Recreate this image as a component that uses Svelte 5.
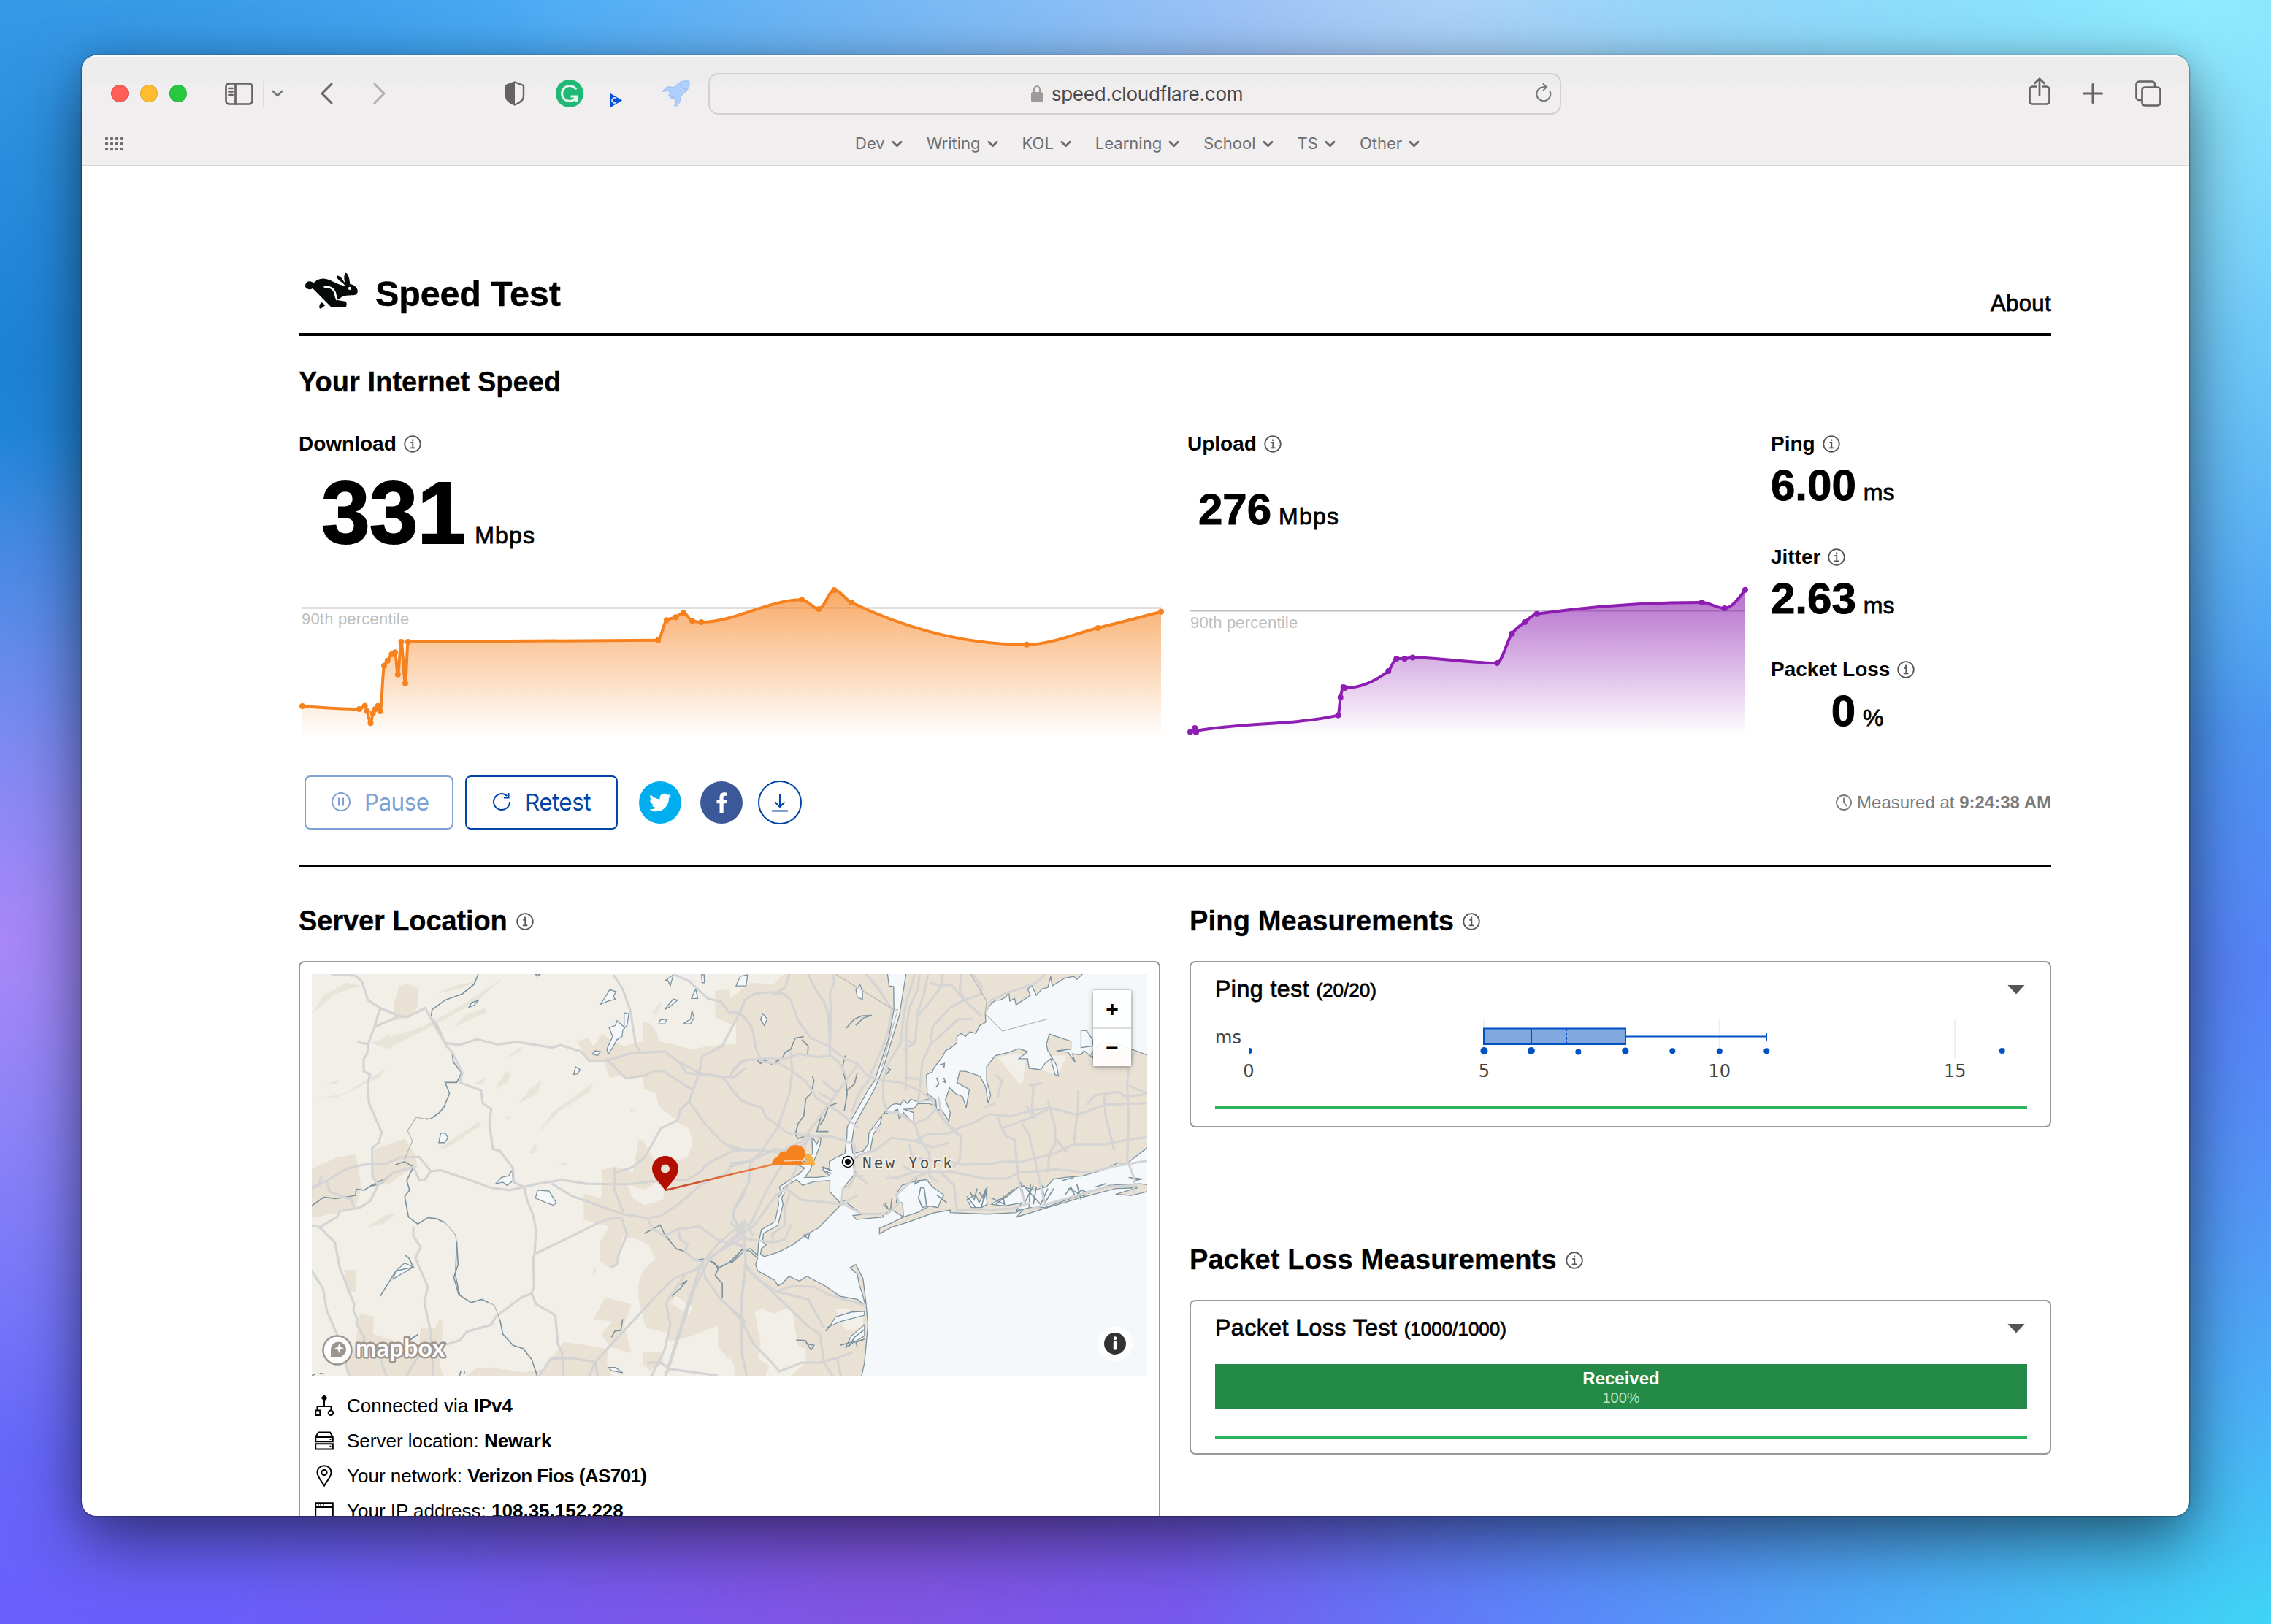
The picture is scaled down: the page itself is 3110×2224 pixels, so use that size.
<script>
  const bookmarks = ['Dev', 'Writing', 'KOL', 'Learning', 'School', 'TS', 'Other'];

  const download = [
    [414, 967], [492, 971], [499.7, 966.7], [502.8, 974], [507.5, 990.3], [510.6, 976.7],
    [513.7, 971.3], [517.6, 966.7], [520.7, 974], [526, 911.7], [530.8, 904.7], [536.3, 896],
    [541, 893.3], [544.8, 923.7], [549.5, 879], [555, 935.7], [558.8, 879], [901, 876.7],
    [912.9, 849.3], [925.3, 845.3], [936, 839.3], [948, 850.3], [960.3, 852], [1098, 821.3],
    [1121.4, 834], [1142.4, 808], [1165.8, 825], [1406, 882.7], [1503.5, 860], [1590, 837.7]
  ];
  const upload = [
    [1630, 1002.5], [1638, 1001], [1832.5, 979.6], [1835.7, 955], [1839.6, 941],
    [1842, 942], [1901.3, 919], [1912.4, 902], [1923.5, 902], [1934.5, 900.4], [2050, 908],
    [2070.5, 867.8], [2088, 852], [2104.5, 840.8], [2330.7, 825], [2361.6, 833], [2390, 807.8]
  ];
  const uploadDots = [...upload, [1636.4, 997], [1638, 1003]];

  // Monotone cubic interpolation, so the line never overshoots its samples.
  function monotone(pts) {
    const n = pts.length;
    const h = [], s = [], m = [];
    for (let i = 0; i < n - 1; i++) {
      h[i] = pts[i + 1][0] - pts[i][0];
      s[i] = (pts[i + 1][1] - pts[i][1]) / h[i];
    }
    for (let i = 1; i < n - 1; i++) {
      const p = (s[i - 1] * h[i] + s[i] * h[i - 1]) / (h[i - 1] + h[i]);
      m[i] = (Math.sign(s[i - 1]) + Math.sign(s[i])) * Math.min(Math.abs(s[i - 1]), Math.abs(s[i]), 0.5 * Math.abs(p)) || 0;
    }
    m[0] = (3 * s[0] - m[1]) / 2;
    m[n - 1] = (3 * s[n - 2] - m[n - 2]) / 2;
    let d = `M${pts[0][0]},${pts[0][1]}`;
    for (let i = 0; i < n - 1; i++) {
      const k = h[i] / 3;
      d += `C${pts[i][0] + k},${pts[i][1] + k * m[i]} ${pts[i + 1][0] - k},${pts[i + 1][1] - k * m[i + 1]} ${pts[i + 1][0]},${pts[i + 1][1]}`;
    }
    return d;
  }
  const area = (pts, y) => `${monotone(pts)}L${pts[pts.length - 1][0]},${y}L${pts[0][0]},${y}Z`;

  const side = [
    { label: 'Ping', value: '6.00', unit: 'ms' },
    { label: 'Jitter', value: '2.63', unit: 'ms' },
    { label: 'Packet Loss', value: '0', unit: '%' }
  ];
  const ticks = [0, 5, 10, 15];
  const px = (v) => 1710 + v * 64.48;
  const pings = [[5, 1440, 5], [6, 1440, 5], [7, 1441.5, 4], [8, 1440, 4.6], [9, 1440.3, 4], [10, 1440.6, 4], [11, 1440.3, 4], [16, 1440, 4]];

  const urbanWest = [
    '370,300 400,293 438,308 438,360 410,400 350,410 355,350',
    '60,880 160,840 220,832 240,935 220,1005 60,1035',
    '285,815 390,783 425,830 435,875 390,890 330,930 280,910',
    '180,1197 220,1197 220,1267 190,1267',
    '985,475 1025,465 1045,490 1075,450 1100,470 1150,490 1215,475 1215,415 1240,418 1265,450 1270,475 1320,485 1380,500 1490,485 1570,485 1570,1540 1535,1540 1530,1500 1475,1440 1475,1373 1370,1410 1305,1425 1300,1395 1225,1380 1200,1290 1200,1240 1215,1200 1257,1162 1235,1120 1195,1100 1145,1093 1125,1180 1100,1190 1065,1170 1065,1110 1100,1060 1010,1040 1010,955 1070,970 1075,880 1120,870 1180,890 1200,785 1218,788 1240,830 1275,745 1340,725 1310,710 1270,680 1260,640 1220,625 1215,590 1130,585 1100,590 1080,540 1030,540',
    '1085,1282 1175,1305 1150,1370 1175,1460 1100,1440 1070,1400 1110,1360 1043,1353',
    '1215,1457 1285,1457 1285,1490 1240,1515 1215,1495',
    '590,1540 640,1507 690,1505 800,1520 870,1510 895,1480 940,1425 1060,1440 1095,1450 1090,1490 1110,1540',
    '235,1335 283,1345 280,1400 350,1420 440,1440 445,1378 495,1380 510,1355 525,1360 515,1450 510,1500 530,1540 200,1540 180,1490 215,1450',
    '1465,315 1530,310 1570,330 1570,400 1520,420 1465,400'
  ];
  const openWest = [
    '1240,830 1275,745 1330,728 1375,750 1387,800 1370,840 1320,855 1255,850',
    '1160,925 1220,945 1260,920 1290,945 1285,975 1220,992 1180,970',
    '1310,1300 1330,1280 1385,1315 1375,1340'
  ];
  const hills = [
    '68,390 110,330 190,290 238,300 150,325', '68,660 180,640 330,560 400,490 300,590 160,650', '270,480 450,430 590,360 730,275 640,350 500,420 330,500',
    '500,820 645,730 655,740 540,810', '850,770 900,700 1045,605 1030,635 920,700', '785,670 830,620 865,598 850,640',
    '705,625 740,570 760,575 745,605', '260,1063 330,1020 358,1020 320,1050', '820,830 840,800 852,805 840,828',
    '740,530 785,495 797,500 780,515', '630,610 668,588 665,610', '110,612 160,597 158,610', '735,722 758,705 755,720',
    '920,868 950,853 950,865', '1165,695 1175,688 1195,694 1178,700', '1245,390 1275,350 1280,358 1262,392', '1040,1220 1045,1185 1055,1195',
    '560,430 600,390 670,370 670,385 610,410', '320,465 330,450 340,460', '500,325 560,300 640,285 580,310'
  ];
  const roadsWest = [
    '135,263 220,268 243,288 263,345 305,370 285,430 265,480 260,515 248,530 248,570 270,580 262,605 266,670 310,762 300,795 278,812 278,900 298,930',
    '305,370 370,395 400,398 460,370 480,400 500,420 530,480 580,487 640,468 710,485 780,477 900,495 930,487 1000,507 1030,537 1080,538 1180,512 1290,507 1340,540 1410,575 1490,587 1530,588 1570,560',
    '285,430 365,398', '225,478 262,484',
    '480,400 497,430 535,490 555,510 590,575 580,605 655,630 660,670 690,690 683,730 695,815 718,820 765,875 768,920 803,935 815,980 835,1025 845,1070 840,1145 835,1160 838,1245 830,1272 845,1305 912,1340 920,1430 935,1460 940,1540',
    '60,945 120,915 190,877 250,864 320,864 375,842 440,840 480,885 515,882 590,905 690,938 755,945 850,925 935,913 1020,925 1160,927 1240,918 1370,912 1410,890 1440,860 1530,820 1570,818',
    '900,925 965,962 1060,993 1150,1022 1230,1033 1275,1027 1330,995 1420,925 1500,895 1520,870 1570,857',
    '298,930 350,890 420,872 440,912 460,912 480,885', '120,915 130,950 205,975 215,1000', '103,898 90,930 68,935',
    '60,1055 95,1062 148,1110 165,1190 215,1305 212,1325 225,1350 225,1370 250,1410 250,1440 300,1465 330,1540',
    '95,1062 155,1030 165,1012 235,1000 270,980 298,930',
    '420,1060 420,1090 445,1125 427,1160 470,1250 458,1300 482,1400 480,1430 430,1480 390,1540', '480,1470 490,1485 485,1540',
    '60,1190 107,1255 120,1325 155,1400 200,1540',
    '845,1145 1085,1038 1140,1032 1160,1085 1130,1150 1125,1180 1100,1190',
    '830,1272 795,1283 705,1345 690,1370 605,1392 580,1420 535,1432',
    '1113,265 1145,310 1172,380 1190,485 1210,515',
    '1088,530 1155,592 1225,582 1255,568 1285,570 1390,630',
    '1320,263 1375,285 1440,340 1485,350 1515,385 1550,385 1570,345',
    '1550,385 1490,490 1420,522 1410,575 1375,665 1345,690 1335,725 1277,750 1250,795 1220,843 1180,872 1120,890 1115,940 1150,1022',
    '1550,385 1570,400', '1340,540 1365,575 1490,587', '1520,585 1530,560 1555,540 1570,540',
    '1375,665 1430,735 1480,785 1535,820', '1490,587 1555,660 1570,663', '1115,875 1118,900',
    '850,1540 895,1478 960,1475 1050,1487 1060,1540', '1025,1540 1050,1487 1250,1290 1320,1225 1400,1195 1480,1110 1570,1040',
    '1230,1033 1250,1070 1290,1090 1335,1068 1410,1060 1480,1105 1570,1120', '1335,1068 1345,1100 1370,1115 1360,1140 1395,1165 1420,1170',
    '1290,1540 1375,1290 1420,1170 1430,1220 1480,1285 1570,1360', '1230,1490 1275,1490 1310,1510 1475,1531',
    '1300,1520 1395,1250 1440,1170 1570,1060', '1240,1540 1290,1450 1310,1370 1295,1300 1360,1215', '1420,1170 1570,1090',
    '1570,1170 1555,1300 1560,1470', '1570,950 1530,1010 1530,1035 1560,1080'
  ];
  const riversWest = [
    '645,263 630,295 590,325 530,345 485,375 480,405 497,415 505,440 535,490', '555,515 558,540 587,575 570,605 530,605 545,640 525,685 510,700 480,720 460,720',
    '60,1000 110,967 150,972 220,962 222,942 250,945 275,930 335,903 310,925 275,932', '358,865 390,855 420,872 397,915 407,945 390,965 403,1030 435,1052 470,1032 500,1035 530,1048',
    '570,1108 575,1180 560,1220 577,1275 620,1300 657,1290 685,1302', '720,1355 730,1400 765,1435 800,1445 830,1480 852,1540',
    '570,1108 566,1215 580,1275', '305,1280 360,1200 420,1188 405,1160 390,1150', '1220,1082 1275,1055 1290,1085 1330,1130 1365,1140 1395,1167 1440,1163 1480,1190 1530,1165 1560,1130',
    '1395,1167 1430,1162 1465,1175 1475,1195 1465,1215 1490,1240 1490,1285', '1315,1280 1345,1255 1368,1230 1345,1245', '1145,1352 1138,1388 1118,1390 1106,1410',
    '68,1531 80,1526 M95,1524 110,1525', '580,1531 585,1515', '595,1526 598,1518', '388,1440 395,1425 437,1400 400,1425'
  ];
  const lakesWest = [
    '1068,358 1085,335 1100,312 1122,318 1112,335 1120,342 1095,348', '612,368 622,353 645,346 630,362', '1095,515 1090,500 1110,460 1098,432 1120,425 1125,410 1150,430 1150,385 1166,388 1160,425 1145,440 1143,460 1125,470 1110,495',
    '1040,515 1048,505 1068,508 1058,520', '975,580 982,556 998,565 988,578', '508,795 515,765 530,765 540,780 528,795', '705,925 725,905 750,900 762,882 765,915 745,930 730,920',
    '843,970 850,945 890,948 915,985 905,993 880,985', '1290,375 1320,342 1335,345 1310,365', '1385,378 1392,400 1380,420 1355,420 1380,405', '1270,420 1275,408 1298,405 1290,420', '1290,285 1320,265 1310,300 1300,280',
    '1383,340 1398,310 1405,340', '1418,265 1427,265 1428,290 1420,290', '1097,1505 1120,1505 1145,1522 1105,1515', '360,1200 390,1175 420,1188 350,1225', '843,263 860,263 848,270'
  ];
  const sea = '95,1152 98,1112 108,1070 155,1045 168,990 165,970 178,955 170,935 210,910 240,893 258,875 240,868 285,830 283,775 300,800 315,770 312,800 298,835 275,885 258,905 300,905 345,900 325,885 320,872 345,880 343,855 370,840 397,830 404,775 405,745 440,690 480,625 500,600 548,470 567,375 566,302 550,300 543,250 611,250 589,375 585,395 530,560 500,625 430,740 420,800 425,830 460,822 478,800 480,765 500,740 525,710 520,735 495,770 485,820 440,838 420,855 435,890 390,940 388,975 440,1010 455,1022 425,1025 437,1038 530,1030 528,1020 565,1010 600,1030 555,1050 517,1065 517,1083 560,1062 620,1045 700,1018 762,1008 762,1016 890,1021 990,1016 1020,1000 992,1030 1100,1000 1210,970 1335,940 1410,938 1335,958 1390,962 1460,946 1460,1545 452,1545 465,1490 477,1370 470,1300 460,1225 435,1180 415,1190 440,1210 447,1245 457,1270 468,1310 440,1290 380,1280 330,1248 265,1217 240,1232 203,1217 180,1240 165,1247 155,1230 95,1200 88,1180 95,1160 65,1135 45,1140 5,1175 0,1170 40,1135 70,1130';
  const staten = '385,990 305,1065 265,1085 215,1118 180,1135 160,1143 118,1155 105,1148 108,1130 125,1118 112,1108 115,1082 165,1056 183,990 178,970 187,955 183,938 230,912 250,930 290,918 345,915 345,950';
  const sound = '1460,250 1235,250 1200,280 1190,270 1160,275 1115,300 1110,270 1100,305 1080,310 1060,330 1045,300 1030,310 1040,330 990,360 985,340 968,348 965,320 955,335 935,345 920,345 905,355 883,385 885,415 865,425 850,450 830,445 815,460 800,450 785,460 785,480 765,495 745,505 738,520 705,560 700,572 680,580 682,640 712,660 715,690 735,695 757,728 762,700 745,660 760,622 780,640 805,650 817,685 828,627 785,605 795,570 815,570 865,585 885,620 893,670 902,645 888,600 888,555 918,520 965,510 1000,498 1030,508 1000,530 1030,530 1035,560 1075,565 1090,545 1110,530 1125,580 1137,585 1130,550 1100,505 1095,485 1105,452 1180,475 1180,500 1130,505 1170,510 1195,542 1185,515 1215,517 1225,505 1260,530 1250,515 1280,480 1330,480 1375,495 1460,524';
  const bays = [
    '530,705 560,675 575,672 590,675 600,660 615,672 625,658 645,665 690,657 710,665 712,680 690,672 650,672 635,688 600,690 635,700 635,735 610,710 600,700 585,720 580,690 555,700',
    '580,950 595,930 620,922 650,915 680,912 700,935 740,960 730,975 720,1000 690,995 650,1015 600,1030 597,985 575,985',
    '820,975 850,960 862,985 885,945 890,990 870,1000 835,1000', '905,990 930,975 960,965 1005,930 1050,945 1095,935 1120,910 1160,905 1220,900 1290,882 1340,860 1375,860 1460,800 1460,930 1420,925 1310,930 1200,965 1090,1000 1040,1000 990,1010 1010,985 950,995',
    '345,1375 365,1345 420,1330 465,1328 465,1340 380,1360', '400,1440 420,1405 465,1370 465,1405 430,1425',
    '435,310 450,297 458,315 458,343 440,335', '105,405 113,388 128,405 118,425', '20,300 35,270 60,265 55,300', '1215,440 1235,442 1255,470 1255,490 1215,495'
  ];
  const creeksEast = [
    '400,435 430,405 455,395 490,393 460,402 435,425', '90,530 105,545 120,535 145,548', '155,540 180,530 190,510 210,500 225,465 255,460', '248,470 270,490 268,520',
    '285,585 290,600 280,640 262,655 255,710 235,735 225,770 235,782 275,770', '398,520 388,560 400,600 405,640 395,695', '440,575 430,610 405,630', '370,670 340,680 325,720 310,740', '315,710 300,760 340,760',
    '228,1418 260,1420 280,1450 290,1435 262,1430', '330,1390 345,1375 335,1380', '380,1435 420,1425 460,1420', '410,1440 430,1410 465,1385', '440,1440 435,1425 465,1415', '255,1085 270,1100 275,1080', '660,935 672,940 680,995 665,1000 652,970 660,935',
    '530,990 555,1010 560,970', '545,1000 535,985', '820,965 850,1000', '885,940 870,1000', '905,970 950,990 945,960', '920,990 985,940', '1005,920 1020,985 1050,930', '1060,935 1050,990', '1015,930 1075,990 1100,940', '1040,925 1035,1000', '1080,930 1090,985 1120,940',
    '1160,960 1180,935 1195,965 1215,945 1245,955', '1170,940 1230,965', '1200,925 1215,975', '1265,935 1300,925', '1150,915 1190,905', '1380,905 1425,910 1400,915', '545,560 555,565 540,580', '715,590 722,610 712,620', '740,590 745,605 735,600', '725,550 742,545 740,560',
    '325,875 355,885', '320,882 350,893', '645,905 640,925 660,915', '735,975 715,960 750,985', '830,950 845,975 855,940', '860,950 880,970 890,935'
  ];
  const openEast = ['925,525 985,515 1025,520 1015,600 1005,612', '1075,565 1095,520 1165,520 1140,575 1120,580', '0,263 185,263 150,295 70,290 0,340', '85,1330 110,1318 150,1335 195,1318 215,1325 235,1440 262,1445 260,1490 200,1540 120,1540 135,1500 95,1475 105,1430', '365,1320 400,1318 460,1345 460,1380 400,1390', '0,1470 15,1505 0,1520'];
  const roadsEast = [
    '0,385 35,385 50,345 85,325 140,320 185,325 210,345 235,410 280,465 340,490 395,530 440,545 475,585 530,600 590,605 655,630 695,655 712,690 755,740 795,775',
    '145,330 190,305 205,263', '35,385 75,430 90,500 110,540 170,545 215,570 260,600 300,655', '0,580 45,535 120,530 190,530 240,515 300,525 350,520 375,540 400,580', '270,263 295,310 325,350 340,390 345,490 345,520',
    '355,263 360,290 345,320 350,400 345,490', '470,263 510,305 560,375 548,440 530,490 480,590', '0,620 40,665 110,685 125,715 200,765 280,775 350,775 425,798',
    '0,803 50,820 110,820 165,825 250,790 280,750 330,690 400,600 440,550', '110,820 165,745 205,640 215,570 210,510', '0,860 60,855 160,815 230,825', '0,1045 60,1100 150,1110 190,1100 210,1055',
    '45,1060 50,1130 55,1180 85,1220 160,1265 270,1290 325,1380', '50,1130 0,1105', '0,1100 80,1060 160,960 200,935 250,830 270,775', '10,1040 15,1000 65,920 70,860 110,820', '0,1110 60,1070 130,940 190,850 290,770', '20,1075 55,1050 80,1090',
    '185,935 245,975 340,985 385,990 440,960', '190,1055 190,1000 210,945', '150,1110 145,1085 190,1055', '385,990 390,940 415,930 435,895 475,925', '455,1020 545,1020 585,985 575,960 640,905 700,885', '385,985 455,1020',
    '55,1180 40,1290 40,1460 60,1540', '0,1320 40,1355 80,1430 145,1490 170,1518 245,1490 310,1490 370,1475 425,1457', '55,1190 150,1270 270,1375 310,1400 325,1490 360,1540', '160,1265 215,1248 290,1250 340,1275 470,1310', '370,1475 385,1540',
    '640,263 610,350 600,400 590,480 550,540 530,600 530,660 545,700', '655,263 650,310 620,370 610,430 610,510 608,630', '685,263 670,330 650,380 640,480 600,500', '733,263 733,300 700,340 650,395', '800,263 795,310 810,345 760,370 700,430 695,480 665,540 655,640 650,665 710,660',
    '840,405 790,405 700,480', '690,290 733,300 765,295 810,345 870,395', '840,263 870,300 870,325 830,340 810,345', '880,390 905,345 950,325 1060,290 1090,265', '600,470 640,480', '605,590 655,595',
    '545,700 580,700 640,735 655,780 690,830 690,900 720,920', '640,735 680,720 712,690', '640,790 680,770 760,765 800,745 850,730 895,705 970,712 1060,690 1110,685 1200,708 1300,675 1460,670', '440,835 500,820 560,780 640,790 700,810 760,795',
    '720,650 735,720 800,775 795,850 755,890', '540,908 580,905 630,890 700,885 780,890 880,908 960,908 1000,890 1060,885 1130,880 1240,890 1330,870 1460,850', '620,800 630,840 690,850 760,855 800,865 900,862 950,855 1010,855 1120,830 1190,800 1300,800 1380,785 1460,777',
    '925,710 940,750 955,775 985,785 1000,920 1020,985', '940,750 1030,720 1100,690', '1010,735 1035,770 1055,850 1085,970 1090,995', '1100,660 1125,745 1125,800 1105,830 1100,890', '1205,630 1205,680 1190,800', '1295,645 1300,710 1330,820', '1380,560 1375,615 1380,720 1375,850 1400,910 1400,955',
    '1035,615 1080,607', '1050,615 1045,690 1055,720', '1025,680 1050,715', '1235,675 1265,645 1345,635 1370,650 1460,640', '1380,615 1460,645', '920,580 940,600 925,655', '880,685 918,670', '1125,780 1165,825', '730,890 775,930 785,1008 890,1008 980,1003', '600,870 640,890', '430,800 430,900 460,900',
    '980,1003 1040,985', '1040,1005 1300,935 1410,930', '485,590 445,640 420,700', '370,630 355,660 310,640', '320,600 370,640', '300,655 380,700 445,750', '490,740 520,760', '1400,510 1380,545'
  ];
</script>

{#snippet info()}
  <svg class="info" viewBox="0 0 24 24"><circle cx="12" cy="12" r="10.8" /><path d="M9.300 9.800h3v7.400M8.800 17.400h6.600" /><path class="dot" d="M11 5.600h2.200v2.200H11z" /></svg>
{/snippet}

{#snippet chevron()}
  <svg class="chev" viewBox="0 0 16 10"><path d="M2 2l6 6 6-6" /></svg>
{/snippet}

<div class="desktop">
  <div class="window">
    <header class="chrome">
      <div class="tools">
        <div class="lights"><i class="red"></i><i class="yellow"></i><i class="green"></i></div>
        <svg class="ic sidebar" viewBox="0 0 39 31"><rect x="1.5" y="1.5" width="36" height="28" rx="4.5" /><path d="M14.5 1.5v28M5.5 8h5M5.5 12.500h5M5.500 17h5" /></svg>
        <span class="sep"></span>
        <svg class="ic small" viewBox="0 0 16 10"><path d="M2 2l6 6 6-6" /></svg>
        <svg class="ic back" viewBox="0 0 18 30"><path d="M16 2L3 15l13 13" /></svg>
        <svg class="ic fwd" viewBox="0 0 18 30"><path d="M2 2l13 13L2 28" /></svg>
        <svg class="shield" viewBox="0 0 28 34"><path class="o" d="M14 1.500L26 6v15c0 5-6 9-12 11.500C8 30 2 26 2 21V6z" /><path class="f" d="M14 1L1.500 5.800V21c0 5 6 9.500 12.500 12z" /></svg>
        <svg class="gram" viewBox="0 0 38 38"><circle cx="19" cy="19" r="19" /><path d="M28 13.500A10.500 10.500 0 1 0 27 26M20.500 23h8v7M28.500 23.500l-5 5" /></svg>
        <svg class="play" viewBox="0 0 16 19"><path class="t" d="M0 0l16 9.500L0 19z" /><path class="c" d="M8 6.800a3.500 3.500 0 1 0 0 5.200" /></svg>
        <svg class="rocket" viewBox="740 60 116 110"><path d="M852 63c4 20-3 36-20 50l-14 12c-2 14-4 30-16 41l-12 1c6-10 7-18 5-30l-18-1-11-12 8-15c-10-6-20-4-33-2 8-12 16-22 32-20l14 3 13-12c14-14 30-17 52-15z" /><path class="l" d="M814 75c2 14 16 24 30 22M770 123l24 12" /></svg>
        <div class="url">
          <svg class="lock" viewBox="0 0 16 24"><path d="M4 11V6.500a4 4.500 0 0 1 8 0V11" /><rect y="10" width="16" height="14" rx="2.500" /></svg>
          <span>speed.cloudflare.com</span>
          <svg class="reload" viewBox="0 0 24 26"><path d="M20.500 11A9.500 9.500 0 1 1 12 5.300h3M11.500 1l4.500 4.300-4.500 4.300" /></svg>
        </div>
        <svg class="ic share" viewBox="0 0 30 38"><path d="M10.500 12.500H5.500a4 4 0 0 0-4 4v16a4 4 0 0 0 4 4h19a4 4 0 0 0 4-4v-16a4 4 0 0 0-4-4h-5M15 24V2M8.500 8L15 1.800 21.500 8" /></svg>
        <svg class="ic plus" viewBox="0 0 28 28"><path d="M14 1.500v25M1.500 14h25" /></svg>
        <svg class="ic tabs" viewBox="0 0 36 36"><rect x="9.500" y="9.500" width="25" height="25" rx="4" /><path d="M9 27H5.500a4 4 0 0 1-4-4V5.500a4 4 0 0 1 4-4H23a4 4 0 0 1 4 4V9" /></svg>
      </div>
      <div class="bookmarks">
        <svg class="grid" viewBox="0 0 26 19">
          {#each [0, 7, 14, 21] as x}{#each [0, 7, 14] as y}<rect {x} {y} width="4" height="4" rx="1" />{/each}{/each}
        </svg>
        <nav>{#each bookmarks as b}<span>{b}{@render chevron()}</span>{/each}</nav>
      </div>
    </header>

    <main>
      <div class="head">
        <svg class="rabbit" viewBox="54 38 216 150">
          <path d="M71 75c8 0 14 4 17 7 12-14 28-20 46-18 22 2 42 18 62 24l22 6c-4-8-12-14-20-20-8-6-16-14-15-22 10-4 22 10 30 24l4 4c-4-14-4-32 1-40 12-2 18 22 20 46 14 2 22 8 26 16 4 4 6 10 5 16-2 10-10 13-20 14-16 1-34 0-46 8l-17 12 33 5c6 0 8 24-2 24h-52c-6 0-8-4-12-8L93 112c-4-4-7-6-10-8-6 6-28 6-29-11 0-10 8-18 17-18z" />
          <path d="M122 161l14 12-18 15-6-4c-1-10 2-18 10-23z" />
          <path class="cut" d="M134 97c22-2 38 10 42 24 2 8 2 14 8 28" />
          <circle class="eye" cx="237" cy="104" r="6.500" />
        </svg>
        <h1>Speed Test</h1>
        <a class="about" href="#about">About</a>
      </div>

      <h2 class="first">Your Internet Speed</h2>
      <div class="metrics">
        <section>
          <h3>Download {@render info()}</h3>
          <p class="big"><b>331</b><span>Mbps</span></p>
          <svg class="chart dl" viewBox="405 790 1196 222">
            <defs><linearGradient id="gd" gradientUnits="userSpaceOnUse" x1="0" y1="808" x2="0" y2="1010"><stop offset="0" stop-color="#f6821f" stop-opacity=".68" /><stop offset="1" stop-color="#f6821f" stop-opacity="0" /></linearGradient></defs>
            <path class="pct" d="M413 832.500H1590" />
            <text x="413" y="855">90th percentile</text>
            <path fill="url(#gd)" d={area(download, 1010)} />
            <g class="orange"><path class="ln" d={monotone(download)} />{#each download as [x, y]}<circle cx={x} cy={y} r="4" />{/each}</g>
          </svg>
        </section>
        <section>
          <h3>Upload {@render info()}</h3>
          <p class="mid up"><b>276</b><span class="m">Mbps</span></p>
          <svg class="chart ul" viewBox="1620 790 780 222">
            <defs><linearGradient id="gu" gradientUnits="userSpaceOnUse" x1="0" y1="808" x2="0" y2="1008"><stop offset="0" stop-color="#8d1eb1" stop-opacity=".65" /><stop offset="1" stop-color="#8d1eb1" stop-opacity="0" /></linearGradient></defs>
            <path class="pct" d="M1630 836.500H2390" />
            <text x="1630" y="859.500">90th percentile</text>
            <path fill="url(#gu)" d={area(upload, 1008)} />
            <g class="purple"><path class="ln" d={monotone(upload)} />{#each uploadDots as [x, y]}<circle cx={x} cy={y} r="4" />{/each}</g>
          </svg>
        </section>
        <section>
          {#each side as s}
            <div class="stat">
              <h3>{s.label} {@render info()}</h3>
              <p class="mid"><b>{s.value}</b><span>{s.unit}</span></p>
            </div>
          {/each}
        </section>
      </div>

      <div class="actions">
        <button class="pause"><svg viewBox="0 0 26 26"><circle cx="13" cy="13" r="12" /><path d="M10 7.500v11M16 7.500v11" /></svg>Pause</button>
        <button class="retest"><svg viewBox="0 0 26 26"><path d="M24 13A11 11 0 1 1 20.500 5M22.500 1v6.500H16" /></svg>Retest</button>
        <span class="round tw"><svg viewBox="0 0 24 24"><path d="M23.950 4.570a10 10 0 0 1-2.820.770 4.960 4.960 0 0 0 2.160-2.720c-.95.550-2 .950-3.130 1.180a4.920 4.920 0 0 0-8.380 4.480C7.690 8.100 4.070 6.130 1.640 3.160a4.920 4.920 0 0 0 1.520 6.570 4.900 4.900 0 0 1-2.230-.610v.060a4.920 4.920 0 0 0 3.950 4.830 5 5 0 0 1-2.210.080 4.940 4.940 0 0 0 4.600 3.420A9.870 9.870 0 0 1 0 19.540a13.990 13.990 0 0 0 7.550 2.210c9.050 0 14-7.500 14-13.980 0-.210 0-.420-.020-.630a9.940 9.940 0 0 0 2.460-2.550z" /></svg></span>
        <span class="round fb"><svg viewBox="0 0 14 28"><path d="M4 28V15.300H0V10.400h4V7C4 2.600 6.500.200 10.300.200c1.800 0 3.700.300 3.700.300v4.200h-2.100c-2.100 0-2.700 1.300-2.700 2.600v3.100h4.600l-.8 4.900H9.200V28z" /></svg></span>
        <span class="round dlb"><svg viewBox="0 0 26 26"><path d="M13 1v18M6.500 12.500L13 19l6.500-6.500M2 24.500h22" /></svg></span>
        <p class="measured"><svg viewBox="0 0 22 22"><circle cx="11" cy="11" r="10" /><path d="M11 4.500V11l4 5" /></svg>Measured at <b>9:24:38 AM</b></p>
      </div>

      <div class="lower">
        <section>
          <h2>Server Location {@render info()}</h2>
          <div class="card place">
            <div class="map">
              <svg class="tiles" viewBox="0 0 1144 550">
                <g transform="translate(-27 -114) scale(.39541 .43366)">
                  {#each urbanWest as p}<polygon class="urban" points={p} />{/each}
                  {#each openWest as p}<polygon class="open" points={p} />{/each}
                  {#each hills as p}<polygon class="hill" points={p} />{/each}
                </g>
                <g transform="translate(573 -114) scale(.39541 .43366)">
                  <rect class="urban" x="20" y="250" width="1440" height="1290" />
                  {#each openEast as p}<polygon class="open" points={p} />{/each}
                  <polygon class="water" points={sea} />
                  <polygon class="water isle" points={staten} />
                  <polygon class="water" points={sound} />
                  {#each bays as p}<polygon class="water" points={p} />{/each}
                </g>
                <g transform="translate(-27 -114) scale(.39541 .43366)">
                  {#each lakesWest as p}<polygon class="water" points={p} />{/each}
                  {#each riversWest as p}<path class="creek" d={'M' + p} />{/each}
                  {#each roadsWest as p}<polyline class="road" points={p} />{/each}
                  <polyline class="border" points="470,722 430,715 400,757 417,790 388,850" />
                  <polyline class="border" points="530,1048 565,1085 570,1108" />
                  <polyline class="border" points="685,1302 700,1308 720,1355" />
                </g>
                <g transform="translate(573 -114) scale(.39541 .43366)">
                  {#each creeksEast as p}<polyline class="creek" points={p} />{/each}
                  {#each roadsEast as p}<polyline class="road" points={p} />{/each}
                  <polyline class="border" points="365,263 565,375 580,375 525,555" />
                  <polyline class="border" points="833,263 888,348 883,388 943,443 1098,405" />
                </g>
                <defs><linearGradient id="route"><stop offset="0" stop-color="#c8402a" /><stop offset="1" stop-color="#f38a45" /></linearGradient></defs>
                <path class="route" d="M484 296L640 258.500" stroke="url(#route)" />
                <path class="pin" fill-rule="evenodd" d="M484 249c-10 0-18 8-18 17.500 0 12 12 20 18 30 6-10 18-18 18-30C502 257 494 249 484 249zm0 11.500a6 6 0 1 1 0 12 6 6 0 0 1 0-12z" />
                <path class="cloud" d="M630 261c0-7 5-11 9-11 0-6 6-9 11-7 2-5 7-9 13-9 8 0 13 6 13 12 0 3-2 6-5 10l2 5z" />
                <path class="cloud2" d="M672 261l3-4 5-3-6-2 2-6c8-1 13 7 13 15z" />
                <path class="cloudcut" d="M646 256l26-1" />
                <circle cx="734" cy="257" r="7.500" fill="#fff" stroke="#000" stroke-width="1.500" /><circle cx="734" cy="257" r="4" />
                <text class="ny" x="754" y="266">New York</text>
                <circle class="mb" cx="35" cy="515" r="19.500" />
                <path class="mbd" d="M26 524V514a10.500 10.500 0 1 1 10.500 10.500z" /><path fill="#fff" d="M37.500 506l1.800 4.700 4.700 1.800-4.700 1.800-1.800 4.700-1.800-4.700-4.700-1.800 4.700-1.800z" />
                <text class="mbt" x="60" y="524">mapbox</text>
                <circle cx="1100" cy="506" r="24" fill="#fff" opacity=".85" />
                <circle cx="1100" cy="506" r="15" fill="#333" /><path class="i" d="M1100 504.500v8M1100 498.500v.500" />
              </svg>
              <div class="zoom"><button>+</button><button>−</button></div>
            </div>
            <ul>
              <li><svg viewBox="0 0 26 30"><path class="f" d="M13 0l4.500 4.500L13 9 8.500 4.500z" /><path d="M13 8v8M3.500 21v-5h19v5" /><rect x="1.200" y="21.500" width="6" height="6.500" /><circle cx="22" cy="24.800" r="3.300" /></svg>Connected via <b>IPv4</b></li>
              <li><svg viewBox="0 0 26 26"><path d="M1.200 8L5 1.500h16L24.800 8v6.200H1.200zM1.200 8h23.600M1.200 17.200h23.600v7.200H1.200zM20.500 11h2M20.500 20.800h2" /></svg>Server location: <b>Newark</b></li>
              <li><svg viewBox="0 0 26 30"><path d="M13 1.200c-5.500 0-9.500 4-9.500 9.300C3.500 17 9.500 22 13 28.500 16.500 22 22.500 17 22.500 10.500c0-5.300-4-9.300-9.500-9.300z" /><circle cx="13" cy="10.500" r="3.600" /></svg>Your network: <b class="isp">Verizon Fios (AS701)</b></li>
              <li><svg viewBox="0 0 26 24"><path d="M1.200 1.200h23.600v21.600H1.200zM1.200 7h23.600M4 4h1.500M7.500 4H9M11 4h1.500" /></svg>Your IP address: <b>108.35.152.228</b></li>
            </ul>
          </div>
        </section>
        <section>
          <h2 class="wide">Ping Measurements {@render info()}</h2>
          <div class="card ping">
            <div class="row"><h4>Ping test <small>(20/20)</small></h4><i class="tri"></i></div>
            <svg class="plot" viewBox="1664 1390 1112 94">
              {#each ticks as t}
                {#if t}<path d="M{px(t)} 1396V1450" stroke="#eee" stroke-width="2" />{/if}
                <text x={px(t)} y="1476" text-anchor="middle">{t}</text>
              {/each}
              <text x="1664" y="1430">ms</text>
              <g class="boxp"><path d="M2226 1420.500H2419M2419 1415v11" /><rect x="2032" y="1409.500" width="194" height="21.500" /><path d="M2097 1409v22M2032 1415v11" /><path stroke-dasharray="4 2" d="M2145 1409v22" /></g>
              <path class="pt" d="M1711 1436a4 4 0 0 1 0 8z" />
              {#each pings as [v, y, r]}<circle class="pt" cx={px(v)} cy={y} {r} />{/each}
            </svg>
            <div class="done"></div>
          </div>
          <h2 class="wide second">Packet Loss Measurements {@render info()}</h2>
          <div class="card loss">
            <div class="row"><h4>Packet Loss Test <small>(1000/1000)</small></h4><i class="tri"></i></div>
            <div class="bar"><b>Received</b><span>100%</span></div>
            <div class="done"></div>
          </div>
        </section>
      </div>
    </main>
  </div>
</div>

<style>
  :global(body) { margin: 0; }
  * { box-sizing: border-box; }
  .desktop {
    width: 3110px; height: 2224px; padding: 76px 112px 148px; overflow: hidden;
    font-family: "Liberation Sans", Arial, sans-serif; color: #000;
    background:
      radial-gradient(ellipse 700px 700px at 0 1290px, #a988f8 0, #a988f800 100%),
      radial-gradient(ellipse 1500px 900px at 3110px 2224px, #3fd4f6 0, #3fd4f600 100%),
      radial-gradient(ellipse 900px 800px at 1200px 2224px, #8254e2 0, #8254e200 100%),
      radial-gradient(ellipse 1300px 1000px at 3000px 0, #90ebff 0, #90ebff00 100%),
      radial-gradient(ellipse 1300px 800px at 2000px 0, #b4caf6 0, #b4caf600 100%),
      radial-gradient(ellipse 900px 900px at 0 500px, #1b82d6 0, #1b82d600 100%),
      linear-gradient(180deg, #4cacf4 0, #4a9cf2 40%, #5a7cf8 65%, #6a5efb 100%);
  }
  .window {
    width: 2886px; height: 2000px; border-radius: 20px; overflow: hidden; background: #fff;
    box-shadow: 0 0 2px 1px rgba(0, 0, 0, .35), 0 36px 90px rgba(0, 0, 0, .5), 0 0 40px rgba(0, 0, 0, .12);
  }
  .chrome { height: 152px; border-bottom: 2px solid #d6d5d5; background: linear-gradient(#ececec 20%, #f0eeef 30%, #f1eff0); box-shadow: inset 0 2px 0 #fafafa; }
  .tools { display: flex; align-items: center; height: 104px; padding: 0 38px 0 40px; }
  .lights { display: flex; gap: 16px; }
  .lights i { width: 24px; height: 24px; border-radius: 50%; box-shadow: inset 0 0 0 1px rgba(0, 0, 0, .12); }
  .red { background: #ff5f57; }
  .yellow { background: #febc2e; }
  .green { background: #28c840; }
  svg { display: block; flex: none; overflow: visible; }
  .ic { fill: none; stroke: #666364; stroke-width: 2.7; stroke-linecap: round; stroke-linejoin: round; }
  .sidebar { width: 39px; height: 31px; margin-left: 52px; }
  .sep { width: 2px; height: 36px; margin-left: 13px; background: #dedcdd; }
  .small { width: 16px; height: 10px; margin-left: 10px; stroke: #777; }
  .back { width: 18px; height: 30px; margin-left: 50px; stroke-width: 3; }
  .fwd { width: 18px; height: 30px; margin-left: 55px; stroke-width: 3; stroke: #b1afb0; }
  .shield { width: 28px; height: 34px; margin-left: 162px; }
  .shield .o { fill: none; stroke: #646262; stroke-width: 2.4; }
  .shield .f { fill: #646262; }
  .gram { width: 38px; height: 38px; margin-left: 42px; fill: #1fb874; }
  .gram path { fill: none; stroke: #e8f5ee; stroke-width: 3; }
  .play { width: 16px; height: 19px; margin: 19px 0 0 37px; }
  .play .t { fill: #0051d8; }
  .play .c { fill: none; stroke: #fff; stroke-width: 1.400; }
  .rocket { width: 38px; height: 36px; margin-left: 55px; }
  .rocket path { fill: #afd0ff; stroke: #8fb2e4; stroke-width: 2.500; }
  .rocket .l { fill: none; }
  .url { display: flex; align-items: center; justify-content: center; width: 1168px; height: 57px; margin-left: 25px; padding-left: 6px; border: 2px solid #d2d0d1; border-radius: 14px; position: relative; font: 26px Inter, sans-serif; letter-spacing: -.22px; color: #4b494a; }
  .lock { width: 16px; height: 24px; margin-right: 12px; fill: #9c9a9b; }
  .lock path { fill: none; stroke: #9c9a9b; stroke-width: 2; }
  .reload { position: absolute; right: 10px; top: 12px; width: 24px; height: 26px; fill: none; stroke: #777; stroke-width: 2; stroke-linecap: round; }
  .share { width: 30px; height: 38px; margin: -6px 0 0 auto; }
  .plus { width: 28px; height: 28px; margin-left: 44px; stroke-width: 3; }
  .tabs { width: 36px; height: 36px; margin-left: 44px; }
  .bookmarks { display: flex; align-items: center; height: 34px; padding-left: 32px; }
  .grid { width: 26px; height: 19px; fill: #6c6a6b; }
  nav { display: flex; gap: 33px; margin: -2px 0 0 1001px; font: 22px Inter, sans-serif; color: #6f6d6e; letter-spacing: 0; }
  nav span { display: flex; align-items: center; gap: 9px; }
  .chev { width: 15px; height: 10px; margin-top: 2px; fill: none; stroke: #6c6a6b; stroke-width: 3; stroke-linecap: round; stroke-linejoin: round; }

  main { width: 2400px; margin-left: 297px; }
  h1, h2, h3, h4, p, ul { margin: 0; padding: 0; }
  .head { display: flex; align-items: flex-end; height: 232px; padding-bottom: 20px; border-bottom: 4px solid #000; }
  .rabbit { width: 72px; height: 50px; margin: 0 24px 13px 9px; fill: #060a0a; }
  .rabbit .cut { fill: none; stroke: #fff; stroke-width: 8; stroke-linecap: round; }
  .rabbit .eye { fill: #fff; }
  h1 { font-size: 48.500px; line-height: 60px; margin-bottom: 4px; letter-spacing: -.15px; -webkit-text-stroke: .4px; }
  .about { margin-left: auto; font-size: 31px; line-height: 40px; color: #000; text-decoration: none; -webkit-text-stroke: .8px; letter-spacing: .4px; }
  h2 { display: flex; align-items: center; gap: 12px; font-size: 38px; line-height: 50px; letter-spacing: -.1px; white-space: nowrap; -webkit-text-stroke: .3px; }
  h2.first { margin-top: 38px; letter-spacing: .05px; }
  h2.wide { letter-spacing: .18px; }
  .info { width: 24px; height: 24px; fill: none; stroke: #555; stroke-width: 1.800; }
  .info .dot { fill: #555; stroke: none; }
  h2 .info { margin-top: 2px; }
  .metrics { display: grid; grid-template-columns: 1217px 799px 1fr; height: 424px; margin-top: 40px; }
  h3 { display: flex; align-items: center; gap: 10px; font-size: 28px; line-height: 40px; }
  .big { display: flex; align-items: baseline; gap: 10px; height: 120px; margin: 14px 0 28px 31px; font-size: 120px; line-height: 120px; }
  .big b { letter-spacing: -1px; margin-right: 3px; -webkit-text-stroke: 2px; }
  .big span, .mid span { font-size: 32px; -webkit-text-stroke: .8px; letter-spacing: 1.200px; }
  .mid { display: flex; align-items: baseline; gap: 10px; height: 60px; font-size: 60px; line-height: 60px; }
  .mid b { -webkit-text-stroke: 1px; }
  .mid span { letter-spacing: 0; }
  .mid .m { letter-spacing: 1.200px; }
  .up { margin: 40px 0 62px 15px; }
  .chart { height: 222px; }
  .dl { width: 1196px; margin-left: -4px; }
  .ul { width: 780px; margin-left: -6px; }
  .chart text { font-size: 22px; fill: #bdbdbd; letter-spacing: .2px; }
  .pct { stroke: #bfbfbf; stroke-width: 2; }
  .ln { fill: none; stroke-width: 4; stroke-linejoin: round; }
  .orange { stroke: #f6821f; fill: #f6821f; }
  .purple { stroke: #8d1eb1; fill: #8d1eb1; }
  .orange circle, .purple circle { stroke: none; }
  .stat { height: 154.500px; }
  .stat .mid { margin-top: 7px; }
  .stat b { min-width: 116px; text-align: right; }

  .actions { display: flex; align-items: center; height: 74px; margin: 50px 0 0; padding-left: 8px; }
  .actions button { display: flex; align-items: center; height: 74px; padding: 0 0 2px 35px; border: 2px solid; border-radius: 8px; background: #fff; font: 31.500px Inter, sans-serif; letter-spacing: -.6px; }
  .actions button svg { width: 26px; height: 26px; margin-right: 19px; fill: none; stroke: currentColor; stroke-width: 2; }
  .pause { width: 204px; color: #7fa0d2; }
  .retest { width: 209px; margin-left: 16px; color: #0045a6; }
  .round { display: flex; align-items: center; justify-content: center; width: 58px; height: 58px; border-radius: 50%; }
  .tw { margin-left: 29px; background: #00aeef; fill: #fff; }
  .tw svg { width: 30px; height: 30px; }
  .fb { margin-left: 26px; background: #3b5998; fill: #fff; }
  .fb svg { width: 15px; height: 28px; }
  .dlb { width: 60px; height: 60px; margin-left: 21px; border: 2px solid #0045a6; }
  .dlb svg { width: 26px; height: 26px; fill: none; stroke: #0045a6; stroke-width: 2; }
  .measured { display: flex; align-items: center; margin-left: auto; font-size: 24px; color: #7b7b7b; white-space: pre; }
  .measured svg { width: 22px; height: 22px; margin-right: 7px; fill: none; stroke: #7b7b7b; stroke-width: 1.800; }

  .lower { display: grid; grid-template-columns: 1180px 1180px; gap: 40px; margin-top: 48px; border-top: 4px solid #000; padding-top: 48px; }
  .card { margin-top: 30px; border: 2px solid #999; border-radius: 8px; }
  .place { padding: 16px; height: 900px; }
  .map { position: relative; width: 1144px; height: 550px; background: #f2efe8; overflow: hidden; }
  .tiles { width: 1144px; height: 550px; }
  .urban { fill: #e9e1d4; }
  .open { fill: #f2efe8; }
  .hill { fill: #e7e4d9; }
  .water { fill: #f4f8fb; stroke: #7b929e; stroke-width: 1.300; vector-effect: non-scaling-stroke; }
  .isle { fill: #e9e1d4; }
  .creek { fill: none; stroke: #7b929e; stroke-width: 1.600; vector-effect: non-scaling-stroke; }
  .road { fill: none; stroke: #d5d4d4; stroke-width: 3.200; stroke-linejoin: round; vector-effect: non-scaling-stroke; }
  .border { fill: none; stroke: #bbb8b5; stroke-width: 1.300; vector-effect: non-scaling-stroke; }
  .route { stroke-width: 2.400; }
  .pin { fill: #b30f00; }
  .cloud { fill: #f6821f; }
  .cloud2 { fill: #fbad41; }
  .cloudcut { stroke: #f3d2b0; stroke-width: 1.500; }
  .ny { font: 21px "DejaVu Sans Mono", monospace; letter-spacing: 3.100px; fill: #4c4c4c; stroke: #f2efe8; stroke-width: 3; paint-order: stroke; }
  .mb { fill: #fff; stroke: #9c968f; stroke-width: 2.500; }
  .mbd { fill: #9c968f; }
  .mbt { font: 700 34px Lato, sans-serif; letter-spacing: .3px; fill: #fff; stroke: #9c968f; stroke-width: 5; stroke-linejoin: round; paint-order: stroke; }
  .i { fill: none; stroke: #fff; stroke-width: 4.500; stroke-linecap: round; }
  .zoom { position: absolute; top: 22px; right: 22px; width: 52px; border-radius: 3px; box-shadow: 0 0 0 2px rgba(0, 0, 0, .1), 0 2px 8px rgba(0, 0, 0, .25); }
  .zoom button { display: block; width: 52px; height: 51px; padding: 0; border: 0; background: rgba(255, 255, 255, .9); font: 700 30px/51px "Liberation Sans", sans-serif; color: #000; }
  .zoom button + button { height: 53px; border-top: 2px solid #ddd; }
  ul { list-style: none; margin-top: 17px; padding-left: 4px; }
  li { display: flex; align-items: center; height: 48px; font-size: 26px; line-height: 48px; white-space: pre; }
  li svg { width: 26px; margin-right: 18px; fill: none; stroke: #000; stroke-width: 2; }
  li .f { fill: #000; stroke: none; }
  .isp { letter-spacing: -.6px; }
  .ping { height: 228px; padding: 17px 31px 0 33px; }
  .loss { height: 212px; padding: 17px 31px 0 33px; }
  .row { display: flex; align-items: center; justify-content: space-between; height: 40px; }
  h4 { font-size: 32px; font-weight: 400; line-height: 40px; -webkit-text-stroke: .8px; letter-spacing: .5px; }
  h4 small { font-size: 26px; letter-spacing: 0; }
  .tri { width: 24px; height: 13px; margin-right: 3px; background: #555; clip-path: polygon(0 0, 100% 0, 50% 100%); }
  .plot { width: 1112px; height: 94px; margin-top: 14px; font: 24px "DejaVu Sans", Verdana, sans-serif; fill: #444; }
  .boxp path, .boxp rect { fill: #82a8e0; stroke: #0051c3; stroke-width: 2; }
  .pt { fill: #0051c3; }
  .done { height: 4px; background: #2db35e; margin-top: 32px; }
  .second { margin-top: 156px; }
  .bar { display: flex; flex-direction: column; align-items: center; height: 62px; margin-top: 29px; padding-top: 6px; background: #238b47; color: #fff; font-size: 24px; line-height: 28px; }
  .bar span { font-size: 20px; line-height: 24px; color: #b9e2c6; }
  .loss .done { margin-top: 36px; }
</style>
